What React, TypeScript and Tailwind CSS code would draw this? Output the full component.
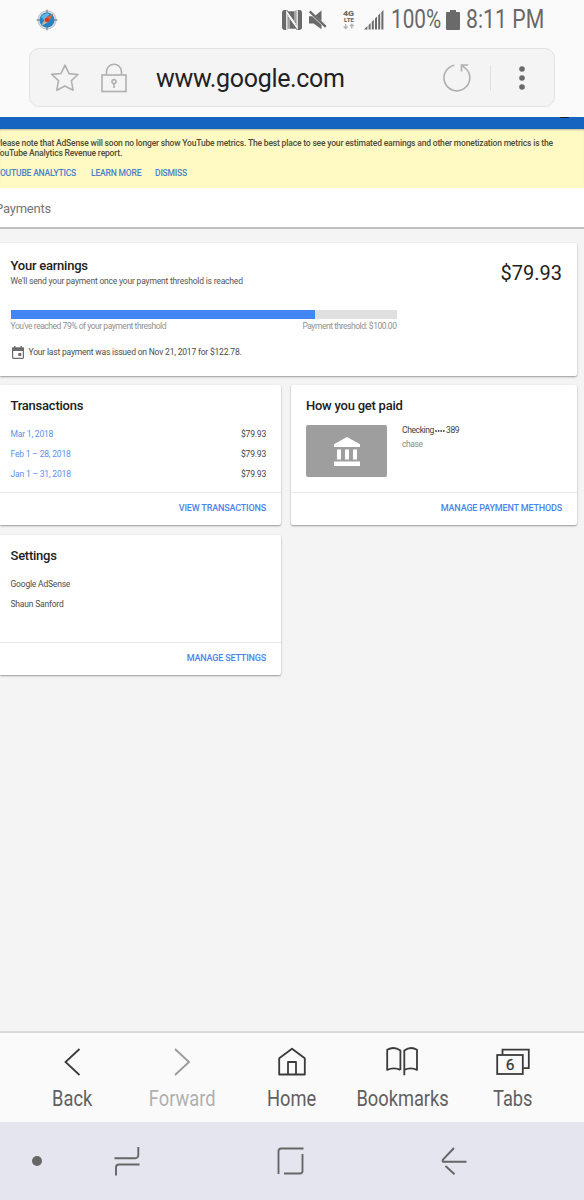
import type { ReactNode } from "react";

interface Transaction {
  label: string;
  amount: string;
}

const transactions: Transaction[] = [
  { label: "Mar 1, 2018", amount: "$79.93" },
  { label: "Feb 1 – 28, 2018", amount: "$79.93" },
  { label: "Jan 1 – 31, 2018", amount: "$79.93" },
];

function SafariIcon() {
  return (
    <svg width="22" height="22" viewBox="0 0 22 22" fill="none">
      <circle cx="11" cy="11" r="9.2" fill="#d3d8dc" stroke="#b3b9be" strokeWidth="0.7" />
      <circle cx="11" cy="11" r="7.5" fill="#2583c4" />
      <path d="M5 8a7 7 0 0 1 9-3l-6 6z" fill="#62b4e4" />
      <path d="M11 .7v3M11 18v3.4M.6 11h3M18 11h3.4" stroke="#59636c" strokeWidth="0.9" />
      <path d="M17.2 4.8 12.7 12.7 9.3 9.3z" fill="#e0632f" />
      <path d="M4.8 17.2 9.3 9.3l3.4 3.4z" fill="#c9b29a" />
      <circle cx="11" cy="11" r="2.3" fill="#d63b20" />
    </svg>
  );
}

function NfcIcon() {
  return (
    <svg width="20" height="20" viewBox="0 0 20 20" fill="none">
      <rect width="20" height="20" rx="2.4" fill="#6a6a6a" />
      <path d="M4.9 20V2.2L13.6 14.5M15.1 0v17.8L6.4 5.5" stroke="#fafafa" strokeWidth="1.4" />
      <path d="M5.6 1.2V0h7.5l1.3 1.2zM5.6 18.8V20h8.8v-1.2z" fill="#fafafa" />
      <path d="M7 8.4v10.4M13 11.6V1.2" stroke="#fafafa" strokeWidth="0.8" />
    </svg>
  );
}

function MuteIcon() {
  return (
    <svg width="20" height="20" viewBox="0 0 20 20">
      <path d="M1 6.3h3.2l9.3 8.6v4.3L5.6 13.4H1z" fill="#6a6a6a" />
      <path d="M7.4 5.4 13.5.6v10.5z" fill="#6a6a6a" />
      <path d="M.9 2.2 2.5.6 18.6 16.1 17 17.7z" fill="#6a6a6a" />
    </svg>
  );
}

function NetworkIcon() {
  return (
    <svg width="14" height="20" viewBox="0 0 14 20" fill="none">
      <text x="1" y="6" fontSize="7" fontWeight="900" fill="#6a6a6a" textLength="11" lengthAdjust="spacingAndGlyphs">4G</text>
      <text x="2" y="12" fontSize="5" fontWeight="900" fill="#6a6a6a" textLength="10" lengthAdjust="spacingAndGlyphs">LTE</text>
      <path d="M3.7 14v4.2M1.8 16.5l1.9 2 1.9-2M9.8 18.7v-4.2M7.9 16.3l1.9-2 1.9 2" stroke="#b5b5b5" strokeWidth="1.3" />
    </svg>
  );
}

function SignalIcon() {
  return (
    <svg width="20" height="20" viewBox="0 0 20 20" fill="#6a6a6a">
      <path d="M0 19.5 3.4 16v3.5zM4.6 15l2-2v6.5h-2zM7.8 11.8l2-2v9.7h-2zM11 8.5l2-2v13h-2zM14.2 5.2l2-2v16.3h-2zM17.4 2l2-2v19.5h-2z" />
    </svg>
  );
}

function StatusBar() {
  return (
    <div className="flex h-[39px] items-center pl-[36px] text-[#686868]">
      <SafariIcon />
      <div className="ml-[224px] flex items-center">
        <NfcIcon />
        <div className="ml-[6px]"><MuteIcon /></div>
        <div className="ml-[14px]"><NetworkIcon /></div>
        <div className="ml-[8px]"><SignalIcon /></div>
        <div className="ml-[7px] w-[55px] whitespace-nowrap pt-[1px] text-[25px] leading-[38px]">
          <span className="inline-block origin-left scale-x-[0.83]">100%</span>
        </div>
        <svg width="14" height="20" viewBox="0 0 14 20" fill="#6a6a6a">
          <path d="M4 0h6v2h3a1 1 0 0 1 1 1v16a1 1 0 0 1-1 1H1a1 1 0 0 1-1-1V3a1 1 0 0 1 1-1h3z" />
        </svg>
        <div className="ml-[6px] whitespace-nowrap pt-[1px] text-[25px] leading-[38px]">
          <span className="inline-block origin-left scale-x-[0.85]">8:11 PM</span>
        </div>
      </div>
    </div>
  );
}

function AddressBar() {
  return (
    <div className="mx-[29px] mt-[9px] flex h-[59px] items-center rounded-[10px] border border-[#e2e2e2] bg-[#f4f4f4]">
      <svg className="ml-[21px]" width="28" height="28" viewBox="0 0 28 28" fill="none" stroke="#b0b0b0" strokeWidth="1.6" strokeLinejoin="round">
        <path d="M14 1.2 18 9.6l9 .9-6.6 6.1 1.7 9.6-8.2-4.2-8.1 4.2 1.7-9.6L.8 10.4l9.2-.9z" />
      </svg>
      <svg className="ml-[22px]" width="26" height="30" viewBox="0 0 26 30" fill="none" stroke="#b0b0b0" strokeWidth="1.6">
        <rect x="1" y="12" width="24" height="16.5" />
        <path d="M5.5 12V8.8a7.5 7.5 0 0 1 15 0V12" />
        <circle cx="13" cy="18.6" r="2" />
        <path d="M13 20.6V25" />
      </svg>
      <div className="ml-[29px] w-[287px] whitespace-nowrap pt-[2px] text-[25px] leading-[57px] tracking-[-0.33px] text-[#222]">www.google.com</div>
      <svg width="28" height="28" viewBox="0 0 28 28" fill="none" stroke="#b0b0b0" strokeWidth="1.6">
        <path d="M11.3 1.3A12.9 12.9 0 1 0 23 4.8L18.5 1" />
        <path d="M18.5 7.5V1h6.7" />
      </svg>
      <div className="ml-[19px] h-[26px] w-px bg-[#e0e0e0]" />
      <svg className="ml-[28px]" width="6" height="24" viewBox="0 0 6 24" fill="#6a6a6a">
        <circle cx="3" cy="3" r="2.8" />
        <circle cx="3" cy="12" r="2.8" />
        <circle cx="3" cy="21" r="2.8" />
      </svg>
    </div>
  );
}

function Notice() {
  return (
    <div className="h-[59px] overflow-hidden bg-[#fff9c4] pt-[9px] font-medium shadow-[inset_0_2px_2px_-1px_rgba(0,0,0,0.25)]">
      <p className="-ml-[5px] whitespace-nowrap text-[8.5px] leading-[10px] tracking-[-0.17px] text-[#4f4c38]">
        Please note that AdSense will soon no longer show YouTube metrics. The best place to see your estimated earnings and other monetization metrics is the
        <br />
        YouTube Analytics Revenue report.
      </p>
      <div className="-ml-[5px] mt-[9px] flex whitespace-nowrap text-[8.5px] leading-[12px] tracking-[-0.17px] text-[#4a80cc]">
        <span className="w-[96px]">YOUTUBE ANALYTICS</span>
        <span className="w-[64px]">LEARN MORE</span>
        <span>DISMISS</span>
      </div>
    </div>
  );
}

function Card({ className, children }: { className: string; children: ReactNode }) {
  return (
    <section className={`bg-white shadow-[0_1px_2px_rgba(0,0,0,0.38)] ${className}`}>{children}</section>
  );
}

function CardTitle({ children }: { children: ReactNode }) {
  return <h2 className="whitespace-nowrap text-[13px] font-medium leading-[16px] tracking-[-0.24px] text-[#212121]">{children}</h2>;
}

function CardAction({ children }: { children: ReactNode }) {
  return (
    <div className="flex h-[33px] items-center justify-end border-t border-[#e8e8e8] pr-[15px] text-[9px] font-medium tracking-[-0.17px] text-[#4a84ec]">
      {children}
    </div>
  );
}

function EarningsCard() {
  return (
    <Card className="h-[133px] w-[577px] rounded-r-[2px] pl-[10.5px] pr-[15px] pt-[15px]">
      <div className="flex h-[52px] justify-between">
        <div>
          <CardTitle>Your earnings</CardTitle>
          <p className="text-[8.5px] leading-[15px] tracking-[-0.19px] text-[#555]">We'll send your payment once your payment threshold is reached</p>
        </div>
        <div className="pt-[3px] text-[20px] leading-[25px] text-[#212121]">$79.93</div>
      </div>
      <div className="h-[9px] w-[386px] bg-[#e0e0e0]">
        <div className="h-full w-[79%] bg-[#4285f4]" />
      </div>
      <div className="flex h-[15px] w-[386px] justify-between whitespace-nowrap text-[8.5px] leading-[15px] tracking-[-0.46px] text-[#919191]">
        <span>You've reached 79% of your payment threshold</span>
        <span>Payment threshold: $100.00</span>
      </div>
      <div className="mt-[11px] flex items-center text-[8.5px] leading-[15px] tracking-[-0.19px] text-[#4c4c4c]">
        <svg className="ml-[1px] mr-[5px]" width="12" height="13" viewBox="0 0 12 13" fill="none">
          <path d="M2.8 0v2M9.2 0v2" stroke="#6c6c6c" strokeWidth="1.4" />
          <path d="M0 1.5h12V5H0z" fill="#6c6c6c" />
          <rect x="0.6" y="2" width="10.8" height="10.4" rx="0.8" stroke="#6c6c6c" strokeWidth="1.2" />
          <path d="M6.3 7h3v3h-3z" fill="#6c6c6c" />
        </svg>
        Your last payment was issued on Nov 21, 2017 for $122.78.
      </div>
    </Card>
  );
}

function TransactionsCard() {
  return (
    <Card className="h-[140px] w-[281px] rounded-r-[2px]">
      <div className="h-[107px] pl-[10.5px] pr-[15px] pt-[13px]">
        <CardTitle>Transactions</CardTitle>
        <div className="mt-[10px] text-[8.5px] leading-[20px] tracking-[-0.18px]">
          {transactions.map((t) => (
            <div key={t.label} className="flex justify-between">
              <span className="text-[#5a90f0]">{t.label}</span>
              <span className="text-[#424242]">{t.amount}</span>
            </div>
          ))}
        </div>
      </div>
      <CardAction>VIEW TRANSACTIONS</CardAction>
    </Card>
  );
}

function PaymentMethodCard() {
  return (
    <Card className="h-[140px] w-[286px] rounded-[2px]">
      <div className="h-[107px] px-[15px] pt-[13px]">
        <CardTitle>How you get paid</CardTitle>
        <div className="mt-[11px] flex">
          <div className="flex h-[52px] w-[81px] items-center justify-center rounded-[2px] bg-[#9e9e9e]">
            <svg width="26" height="29" viewBox="0 0 26 29" fill="#fff">
              <path d="M0 7.2 13 0l13 7.2V10H0zM3 12.5h4v10H3zM11 12.5h4v10h-4zM19 12.5h4v10h-4zM0 24.5h26V29H0z" />
            </svg>
          </div>
          <div className="ml-[15px] text-[8.5px] leading-[13.5px] tracking-[-0.38px]">
            <div className="-mt-[1px] flex items-center text-[#424242]">
              <span>Checking</span>
              <svg className="mx-[1px]" width="10" height="2" viewBox="0 0 10 2" fill="#424242">
                <circle cx="1" cy="1" r="0.9" />
                <circle cx="3.6" cy="1" r="0.9" />
                <circle cx="6.2" cy="1" r="0.9" />
                <circle cx="8.8" cy="1" r="0.9" />
              </svg>
              <span>389</span>
            </div>
            <div className="text-[#8a8a8a]">chase</div>
          </div>
        </div>
      </div>
      <CardAction>MANAGE PAYMENT METHODS</CardAction>
    </Card>
  );
}

function SettingsCard() {
  return (
    <Card className="mt-[10px] h-[140px] w-[281px] rounded-r-[2px]">
      <div className="h-[107px] pl-[10.5px] pt-[13px]">
        <CardTitle>Settings</CardTitle>
        <div className="mt-[10px] text-[8.5px] leading-[20px] tracking-[-0.2px] text-[#4c4c4c]">
          <div>Google AdSense</div>
          <div>Shaun Sanford</div>
        </div>
      </div>
      <CardAction>MANAGE SETTINGS</CardAction>
    </Card>
  );
}

interface ToolItemProps {
  label: string;
  disabled?: boolean;
  children: ReactNode;
}

function ToolItem({ label, disabled, children }: ToolItemProps) {
  return (
    <div className={`flex flex-1 flex-col items-center ${disabled ? "text-[#b0b0b0]" : "text-[#606060]"}`}>
      <svg
        className={disabled ? "stroke-[#999]" : "stroke-[#3b3b3b]"}
        width="36"
        height="32"
        viewBox="0 0 36 32"
        fill="none"
        strokeWidth="1.8"
      >
        {children}
      </svg>
      <span className="mt-[5px] scale-x-[0.83] whitespace-nowrap text-[22px] leading-[32px]">{label}</span>
    </div>
  );
}

function Toolbar() {
  return (
    <div className="flex h-[91px] border-t-2 border-[#d9d9d9] bg-[#fafafa] pl-[17px] pr-[16px] pt-[13px]">
      <ToolItem label="Back">
        <path d="M25.5 3 11.5 16l14 13" />
      </ToolItem>
      <ToolItem label="Forward" disabled>
        <path d="M11 3l14 13-14 13" />
      </ToolItem>
      <ToolItem label="Home">
        <path d="M5.2 28.5V12.3L18 2.7l12.8 9.6v16.2zM14 28.5V16h8v12.5" strokeLinejoin="round" />
      </ToolItem>
      <ToolItem label="Bookmarks">
        <path d="M16.4 23.9V4.5Q10-.2 3.2 3.8v20.1Q9.8 20.8 16.4 23.9" strokeLinejoin="round" />
        <path d="M20.3 29.2V4.5Q26.7-.2 33 3.8v20.1Q26.7 20.8 20.3 23.9" strokeLinejoin="round" />
      </ToolItem>
      <ToolItem label="Tabs">
        <path d="M7.5 8.5V3.7h26.3v18.5h-5.5" />
        <rect x="2.2" y="9" width="25.6" height="19" />
        <text x="15" y="24" textAnchor="middle" fontSize="15.5" fill="#3b3b3b" stroke="#3b3b3b" strokeWidth="0.3">6</text>
      </ToolItem>
    </div>
  );
}

function SystemNav() {
  return (
    <div className="flex h-[78px] items-center bg-[#e5e5ef] pl-[32px]">
      <div className="h-[10px] w-[10px] rounded-full bg-[#666]" />
      <svg className="ml-[72px]" width="26" height="30" viewBox="0 0 26 30" fill="none" stroke="#666" strokeWidth="1.9">
        <path d="M.5 12.3h20.8a3 3 0 0 0 3-3V1M25.5 18.5H5a3 3 0 0 0-3 3V29.5" />
      </svg>
      <svg className="ml-[137px]" width="28" height="28" viewBox="0 0 28 28" fill="none" stroke="#666" strokeWidth="1.9">
        <path d="M1.5 27V4A2.5 2.5 0 0 1 4 1.5H26.5M25.5 7v17a2.5 2.5 0 0 1-2.5 2.5H7" />
      </svg>
      <svg className="ml-[136px]" width="26" height="28" viewBox="0 0 26 28" fill="none" stroke="#666" strokeWidth="1.9">
        <path d="M13 1 2 12.5Q1 14.8 2.5 14.8H25.5M4.5 19l9 8.3" />
      </svg>
    </div>
  );
}

export default function App() {
  return (
    <div className="flex h-[1200px] w-[584px] flex-col overflow-hidden bg-[#f4f4f4] font-['Roboto',sans-serif]">
      <header className="h-[117px] shrink-0 bg-[#fafafa]">
        <StatusBar />
        <AddressBar />
      </header>
      <div className="flex h-[12px] shrink-0 justify-end bg-[#1565c0] pr-[15px]">
        <div className="h-[1px] w-[9px] rounded-b-full bg-[#10202c]" />
      </div>
      <Notice />
      <div className="h-[41px] shrink-0 overflow-hidden border-b-2 border-[#c0c0c0] bg-white">
        <h1 className="-ml-[5px] text-[13px] leading-[41px] tracking-[-0.2px] text-[#757575]">Payments</h1>
      </div>
      <main className="flex-1 pt-[14px]">
        <EarningsCard />
        <div className="mt-[9px] flex gap-[10px]">
          <TransactionsCard />
          <PaymentMethodCard />
        </div>
        <SettingsCard />
      </main>
      <footer className="shrink-0">
        <Toolbar />
        <SystemNav />
      </footer>
    </div>
  );
}
